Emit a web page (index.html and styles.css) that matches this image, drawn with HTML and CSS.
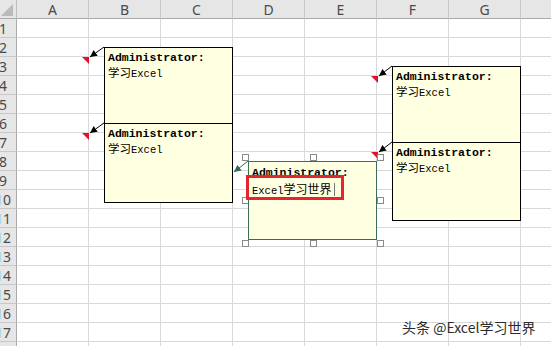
FILE: index.html
```html
<!DOCTYPE html>
<html lang="zh">
<head>
  <meta charset="UTF-8">
  <title>批注 - Excel</title>
  <link rel="stylesheet" href="styles.css">
</head>
<body>
  <!-- 工作表 -->
  <div class="sheet">
    <div class="corner"><span class="corner-tri"></span></div>
    <div class="colHead">A</div><div class="colHead">B</div><div class="colHead">C</div><div class="colHead">D</div>
    <div class="colHead">E</div><div class="colHead">F</div><div class="colHead">G</div><div class="colHead"></div>

    <div class="rowHead">1</div><div class="cell"></div><div class="cell"></div><div class="cell"></div><div class="cell"></div><div class="cell"></div><div class="cell"></div><div class="cell"></div><div class="cell"></div>
    <div class="rowHead">2</div><div class="cell"></div><div class="cell"></div><div class="cell"></div><div class="cell"></div><div class="cell"></div><div class="cell"></div><div class="cell"></div><div class="cell"></div>
    <div class="rowHead">3</div><div class="cell"></div><div class="cell"></div><div class="cell"></div><div class="cell"></div><div class="cell"></div><div class="cell"></div><div class="cell"></div><div class="cell"></div>
    <div class="rowHead">4</div><div class="cell"></div><div class="cell"></div><div class="cell"></div><div class="cell"></div><div class="cell"></div><div class="cell"></div><div class="cell"></div><div class="cell"></div>
    <div class="rowHead">5</div><div class="cell"></div><div class="cell"></div><div class="cell"></div><div class="cell"></div><div class="cell"></div><div class="cell"></div><div class="cell"></div><div class="cell"></div>
    <div class="rowHead">6</div><div class="cell"></div><div class="cell"></div><div class="cell"></div><div class="cell"></div><div class="cell"></div><div class="cell"></div><div class="cell"></div><div class="cell"></div>
    <div class="rowHead">7</div><div class="cell"></div><div class="cell"></div><div class="cell"></div><div class="cell"></div><div class="cell"></div><div class="cell"></div><div class="cell"></div><div class="cell"></div>
    <div class="rowHead">8</div><div class="cell"></div><div class="cell"></div><div class="cell"></div><div class="cell"></div><div class="cell"></div><div class="cell"></div><div class="cell"></div><div class="cell"></div>
    <div class="rowHead">9</div><div class="cell"></div><div class="cell"></div><div class="cell"></div><div class="cell"></div><div class="cell"></div><div class="cell"></div><div class="cell"></div><div class="cell"></div>
    <div class="rowHead">10</div><div class="cell"></div><div class="cell"></div><div class="cell"></div><div class="cell"></div><div class="cell"></div><div class="cell"></div><div class="cell"></div><div class="cell"></div>
    <div class="rowHead">11</div><div class="cell"></div><div class="cell"></div><div class="cell"></div><div class="cell"></div><div class="cell"></div><div class="cell"></div><div class="cell"></div><div class="cell"></div>
    <div class="rowHead">12</div><div class="cell"></div><div class="cell"></div><div class="cell"></div><div class="cell"></div><div class="cell"></div><div class="cell"></div><div class="cell"></div><div class="cell"></div>
    <div class="rowHead">13</div><div class="cell"></div><div class="cell"></div><div class="cell"></div><div class="cell"></div><div class="cell"></div><div class="cell"></div><div class="cell"></div><div class="cell"></div>
    <div class="rowHead">14</div><div class="cell"></div><div class="cell"></div><div class="cell"></div><div class="cell"></div><div class="cell"></div><div class="cell"></div><div class="cell"></div><div class="cell"></div>
    <div class="rowHead">15</div><div class="cell"></div><div class="cell"></div><div class="cell"></div><div class="cell"></div><div class="cell"></div><div class="cell"></div><div class="cell"></div><div class="cell"></div>
    <div class="rowHead">16</div><div class="cell"></div><div class="cell"></div><div class="cell"></div><div class="cell"></div><div class="cell"></div><div class="cell"></div><div class="cell"></div><div class="cell"></div>
    <div class="rowHead">17</div><div class="cell"></div><div class="cell"></div><div class="cell"></div><div class="cell"></div><div class="cell"></div><div class="cell"></div><div class="cell"></div><div class="cell"></div>
    <div class="rowHead">18</div><div class="cell"></div><div class="cell"></div><div class="cell"></div><div class="cell"></div><div class="cell"></div><div class="cell"></div><div class="cell"></div><div class="cell"></div>
  </div>

  <!-- 批注引线与红色标记 -->
  <svg class="leaders" width="551" height="346" viewBox="0 0 551 346">
    <defs>
      <marker id="arrowBlack" markerUnits="userSpaceOnUse" markerWidth="7" markerHeight="7" refX="7" refY="3.5" orient="auto">
        <path d="M0,0 L7,3.5 L0,7 z" fill="#000"/>
      </marker>
      <marker id="arrowGreen" markerUnits="userSpaceOnUse" markerWidth="7" markerHeight="7" refX="7" refY="3.5" orient="auto">
        <path d="M0,0 L7,3.5 L0,7 z" fill="#2f6b52"/>
      </marker>
    </defs>
    <polygon points="82,57 89,57 89,64" fill="#e3102a"/>
    <polygon points="82,133 89,133 89,140" fill="#e3102a"/>
    <polygon points="371,76 378,76 378,83" fill="#e3102a"/>
    <polygon points="371,152 378,152 378,159" fill="#e3102a"/>
    <line x1="104" y1="47" x2="90" y2="57" stroke="#000" stroke-width="1" marker-end="url(#arrowBlack)"/>
    <line x1="104" y1="123" x2="90" y2="133" stroke="#000" stroke-width="1" marker-end="url(#arrowBlack)"/>
    <line x1="392" y1="66" x2="379" y2="76" stroke="#000" stroke-width="1" marker-end="url(#arrowBlack)"/>
    <line x1="392" y1="142" x2="379" y2="152" stroke="#000" stroke-width="1" marker-end="url(#arrowBlack)"/>
    <line x1="248" y1="161" x2="234" y2="172" stroke="#2f6b52" stroke-width="1" marker-end="url(#arrowGreen)"/>
  </svg>

  <!-- 批注框 -->
  <div class="note noteB3">
    <div class="noteAuthor">Administrator:</div>
    <div class="noteText"><span class="cjk">学习</span>Excel</div>
  </div>
  <div class="note noteB7">
    <div class="noteAuthor">Administrator:</div>
    <div class="noteText"><span class="cjk">学习</span>Excel</div>
  </div>
  <div class="note noteF4">
    <div class="noteAuthor">Administrator:</div>
    <div class="noteText"><span class="cjk">学习</span>Excel</div>
  </div>
  <div class="note noteF8">
    <div class="noteAuthor">Administrator:</div>
    <div class="noteText"><span class="cjk">学习</span>Excel</div>
  </div>

  <!-- 正在编辑的批注 -->
  <div class="selection">
    <span class="handle"></span><span class="handle"></span><span class="handle"></span>
    <span class="handle"></span><span class="handle blank"></span><span class="handle"></span>
    <span class="handle"></span><span class="handle"></span><span class="handle"></span>
  </div>
  <div class="note noteEdit">
    <div class="noteAuthor">Administrator:</div>
    <div class="noteText">Excel<span class="cjk">学习世界</span><span class="caret"></span></div>
  </div>
  <div class="markBox"></div>

  <div class="watermark">头条 @Excel学习世界</div>
</body>
</html>
```
FILE: styles.css
```css
/* 全局 */
body {
  margin: 0;
  width: 551px;
  height: 346px;
  overflow: hidden;
  position: relative;
  background-color: #fff;
  font-family: "Noto Sans", "Noto Sans CJK SC", sans-serif;
}

/* 表格 */
.sheet {
  display: grid;
  grid-template-columns: 27px repeat(8, 72px);
  grid-auto-rows: 19px;
  margin-left: -10px; /* 行号左侧被截掉一部分 */
}
.cell {
  box-sizing: border-box;
  border-right: 1px solid #d9d9d9;
  border-bottom: 1px solid #d9d9d9;
}
.corner {
  box-sizing: border-box;
  background-color: #e6e6e6;
  border-right: 1px solid #bdbdbd;
  border-bottom: 1px solid #ababab;
  display: flex;
  justify-content: flex-end;
  align-items: flex-end;
  padding: 0 3px 2px 0;
}
.corner-tri {
  width: 0;
  height: 0;
  border-left: 12px solid transparent;
  border-bottom: 12px solid #bababa;
}
.colHead {
  box-sizing: border-box;
  background-color: #e6e6e6;
  border-right: 1px solid #c8c8c8;
  border-bottom: 1px solid #ababab;
  text-align: center;
  font-size: 14px;
  line-height: 19px;
  color: #4a4a4a;
}
.rowHead {
  box-sizing: border-box;
  background-color: #e6e6e6;
  border-right: 1px solid #ababab;
  border-bottom: 1px solid #c8c8c8;
  text-align: center;
  font-size: 14px;
  line-height: 19px;
  color: #4a4a4a;
  overflow: hidden;
}

/* 引线 */
.leaders {
  position: absolute;
  top: 0;
  left: 0;
}

/* 批注 */
.note {
  position: absolute;
  box-sizing: border-box;
  width: 129px;
  padding: 2px 3px;
  background-color: #ffffe1;
  border: 1px solid #000;
  font-family: "Liberation Mono", "Noto Sans CJK SC", monospace;
  font-size: 11.5px;
  line-height: 15px;
  color: #000;
}
.noteAuthor {
  font-weight: bold;
}
.noteText {
  font-size: 10.5px;
}
.noteText .cjk {
  font-family: "Noto Sans CJK SC", sans-serif;
  font-size: 11.5px;
}
.noteB3 { left: 104px; top: 47px; height: 77px; }
.noteB7 { left: 104px; top: 123px; height: 80px; }
.noteF4 { left: 392px; top: 66px; height: 77px; }
.noteF8 { left: 392px; top: 142px; height: 79px; }
.noteEdit {
  left: 248px;
  top: 161px;
  height: 79px;
  border-color: #3b6e55;
}
.noteEdit .noteAuthor {
  margin-top: 1px;
}
.noteEdit .noteText {
  margin-top: 1px;
}
.noteEdit .noteText .cjk {
  font-size: 12px;
}
.caret {
  display: inline-block;
  width: 1px;
  height: 13px;
  margin-left: 2px;
  vertical-align: -2px;
  background-color: #777;
}

/* 选中框控制点 */
.selection {
  position: absolute;
  left: 242px;
  top: 154px;
  width: 142px;
  height: 93px;
  display: grid;
  grid-template-columns: repeat(3, 7px);
  grid-template-rows: repeat(3, 7px);
  justify-content: space-between;
  align-content: space-between;
}
.handle {
  box-sizing: border-box;
  background-color: #fff;
  border: 1px solid #8a8a8a;
}
.handle.blank {
  visibility: hidden;
}

/* 红色标注框 */
.markBox {
  position: absolute;
  left: 246px;
  top: 175px;
  width: 92px;
  height: 19px;
  border: 3px solid #e3262d;
}

/* 水印 */
.watermark {
  position: absolute;
  left: 402px;
  top: 317px;
  font-family: "Noto Sans CJK SC", sans-serif;
  font-size: 14px;
  line-height: 20px;
  color: #2b2b2b;
  text-shadow: 0 0 2px #fff, 0 0 2px #fff;
  white-space: nowrap;
}
```
